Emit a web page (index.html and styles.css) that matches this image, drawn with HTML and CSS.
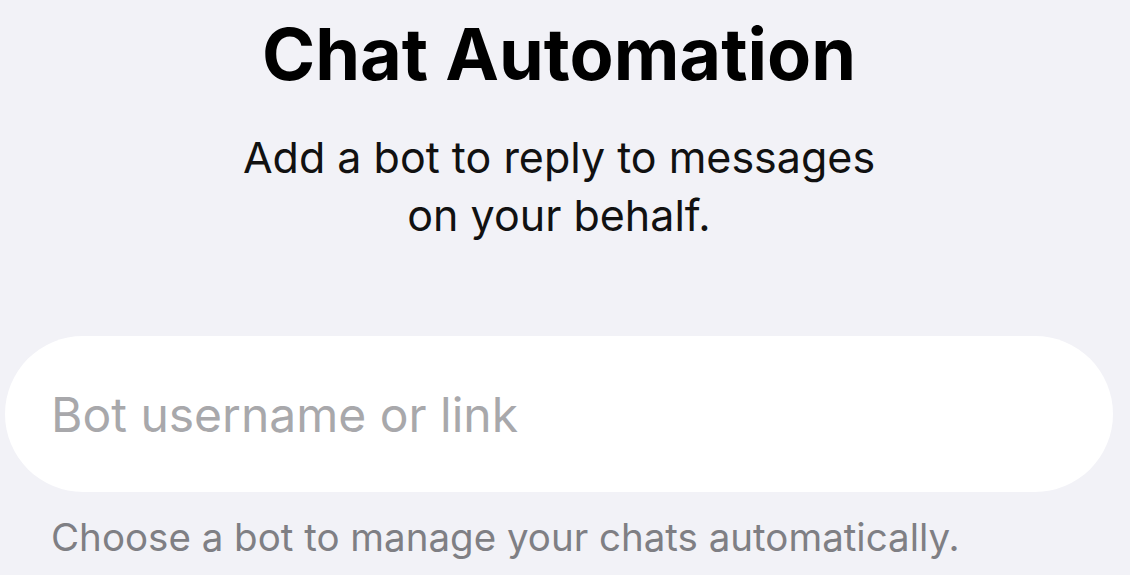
FILE: index.html
```html
<!DOCTYPE html>
<html>
<head>
<meta charset="utf-8">
<link rel="stylesheet" href="styles.css">
</head>
<body>
<main class="page">
  <h1 class="title">Chat Automation</h1>
  <p class="subtitle">Add a bot to reply to messages<br>on your behalf.</p>
  <div class="field">
    <input class="field-input" type="text" placeholder="Bot username or link">
  </div>
  <p class="hint">Choose a bot to manage your chats automatically.</p>
</main>
</body>
</html>
```
FILE: styles.css
```css
html, body {
  margin: 0;
  padding: 0;
  background: #f2f2f7;
  width: 1130px;
  height: 575px;
  overflow: hidden;
  font-family: Inter, "Noto Sans", sans-serif;
}
.page {
  display: flex;
  flex-direction: column;
  align-items: stretch;
  padding: 10px 17px 0 5px;
}
.title {
  margin: 0;
  text-align: center;
  font-size: 72px;
  font-weight: 700;
  line-height: 88px;
  color: #000;
  letter-spacing: 0;
}
.subtitle {
  margin: 30px 0 0;
  text-align: center;
  font-size: 43px;
  line-height: 58px;
  color: #111;
  font-weight: 400;
}
.field {
  margin-top: 92px;
  height: 156px;
  background: #fff;
  border-radius: 78px;
  display: flex;
  align-items: center;
  padding: 0 46px;
}
.field-input {
  border: 0;
  outline: none;
  background: transparent;
  width: 100%;
  font-family: Inter, "Noto Sans", sans-serif;
  font-size: 48px;
  color: #000;
  padding: 0;
}
.field-input::placeholder {
  color: #a8a8ab;
}
.hint {
  margin: 20px 0 0 46px;
  font-size: 38.5px;
  line-height: 50px;
  color: #7f7f84;
}
```
